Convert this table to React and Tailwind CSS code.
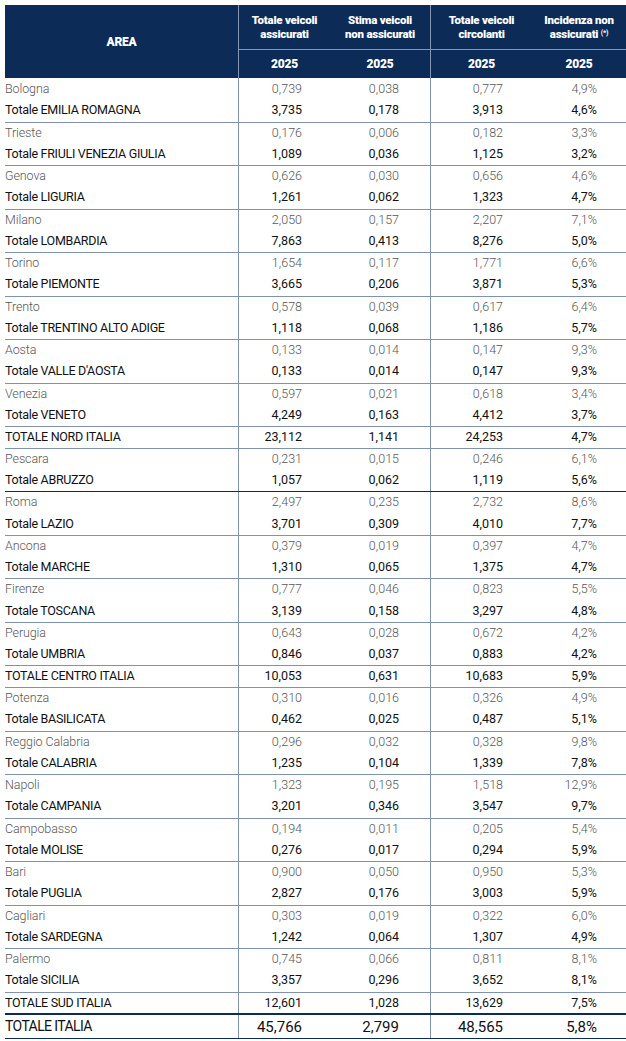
import React from "react";

const rows = [
  ["Bologna", "0,739", "0,038", "0,777", "4,9%"],
  ["Totale EMILIA ROMAGNA", "3,735", "0,178", "3,913", "4,6%"],
  ["Trieste", "0,176", "0,006", "0,182", "3,3%"],
  ["Totale FRIULI VENEZIA GIULIA", "1,089", "0,036", "1,125", "3,2%"],
  ["Genova", "0,626", "0,030", "0,656", "4,6%"],
  ["Totale LIGURIA", "1,261", "0,062", "1,323", "4,7%"],
  ["Milano", "2,050", "0,157", "2,207", "7,1%"],
  ["Totale LOMBARDIA", "7,863", "0,413", "8,276", "5,0%"],
  ["Torino", "1,654", "0,117", "1,771", "6,6%"],
  ["Totale PIEMONTE", "3,665", "0,206", "3,871", "5,3%"],
  ["Trento", "0,578", "0,039", "0,617", "6,4%"],
  ["Totale TRENTINO ALTO ADIGE", "1,118", "0,068", "1,186", "5,7%"],
  ["Aosta", "0,133", "0,014", "0,147", "9,3%"],
  ["Totale VALLE D'AOSTA", "0,133", "0,014", "0,147", "9,3%"],
  ["Venezia", "0,597", "0,021", "0,618", "3,4%"],
  ["Totale VENETO", "4,249", "0,163", "4,412", "3,7%"],
  ["TOTALE NORD ITALIA", "23,112", "1,141", "24,253", "4,7%"],
  ["Pescara", "0,231", "0,015", "0,246", "6,1%"],
  ["Totale ABRUZZO", "1,057", "0,062", "1,119", "5,6%"],
  ["Roma", "2,497", "0,235", "2,732", "8,6%"],
  ["Totale LAZIO", "3,701", "0,309", "4,010", "7,7%"],
  ["Ancona", "0,379", "0,019", "0,397", "4,7%"],
  ["Totale MARCHE", "1,310", "0,065", "1,375", "4,7%"],
  ["Firenze", "0,777", "0,046", "0,823", "5,5%"],
  ["Totale TOSCANA", "3,139", "0,158", "3,297", "4,8%"],
  ["Perugia", "0,643", "0,028", "0,672", "4,2%"],
  ["Totale UMBRIA", "0,846", "0,037", "0,883", "4,2%"],
  ["TOTALE CENTRO ITALIA", "10,053", "0,631", "10,683", "5,9%"],
  ["Potenza", "0,310", "0,016", "0,326", "4,9%"],
  ["Totale BASILICATA", "0,462", "0,025", "0,487", "5,1%"],
  ["Reggio Calabria", "0,296", "0,032", "0,328", "9,8%"],
  ["Totale CALABRIA", "1,235", "0,104", "1,339", "7,8%"],
  ["Napoli", "1,323", "0,195", "1,518", "12,9%"],
  ["Totale CAMPANIA", "3,201", "0,346", "3,547", "9,7%"],
  ["Campobasso", "0,194", "0,011", "0,205", "5,4%"],
  ["Totale MOLISE", "0,276", "0,017", "0,294", "5,9%"],
  ["Bari", "0,900", "0,050", "0,950", "5,3%"],
  ["Totale PUGLIA", "2,827", "0,176", "3,003", "5,9%"],
  ["Cagliari", "0,303", "0,019", "0,322", "6,0%"],
  ["Totale SARDEGNA", "1,242", "0,064", "1,307", "4,9%"],
  ["Palermo", "0,745", "0,066", "0,811", "8,1%"],
  ["Totale SICILIA", "3,357", "0,296", "3,652", "8,1%"],
  ["TOTALE SUD ITALIA", "12,601", "1,028", "13,629", "7,5%"],
];

function Row({ cells, index }) {
  const [label, a, b, c, d] = cells;
  const macro = label.startsWith("TOTALE ");
  const total = macro || label.startsWith("Totale ");
  // a group starts on every city row and on the macro-area totals
  let line = "";
  if (index > 0 && (!total || macro)) {
    line = label === "Roma" ? "border-t border-[#0c2b56]" : "border-t border-[#7f93b1]";
  }
  const tone = total ? "text-[#111111] font-normal" : "text-[#575757] font-light";

  return (
    <div className={`grid grid-cols-[233px_92px_100px_102px_94px] h-[21.76px] text-[12.5px] ${line} ${tone}`}>
      <div className={`flex items-center whitespace-nowrap ${total ? "tracking-[-0.3px]" : "tracking-[-0.1px]"}`}>{label}</div>
      <div className="flex items-center justify-end pr-[28px] border-l border-[#7f93b1]">{a}</div>
      <div className="flex items-center justify-end pr-[31px]">{b}</div>
      <div className="flex items-center justify-end pr-[29px] border-l border-[#7f93b1]">{c}</div>
      <div className="flex items-center justify-end pr-[29px]">{d}</div>
    </div>
  );
}

export default function App() {
  return (
    <div className="min-h-screen bg-white pt-[5px] pl-[5px] font-['Roboto','Liberation_Sans',Arial,sans-serif]">
      <div className="w-[621px]">
        {/* Header */}
        <div className="grid grid-cols-[233px_92px_100px_102px_94px] grid-rows-[45px_28px] bg-[#0c2b56] text-white font-black text-[11.5px] leading-[14px] tracking-[-0.25px]">
          <div className="row-span-2 flex items-center justify-center text-[12px]">AREA</div>
          <div className="flex items-center justify-center text-center border-l border-b border-[#8396b3]">
            Totale veicoli<br />assicurati
          </div>
          <div className="flex items-center justify-center text-center border-b border-[#8396b3]">
            Stima veicoli<br />non assicurati
          </div>
          <div className="flex items-center justify-center text-center border-l border-b border-[#8396b3]">
            Totale veicoli<br />circolanti
          </div>
          <div className="flex items-center justify-center text-center border-b border-[#8396b3]">
            <span>
              Incidenza non<br />assicurati <sup className="text-[7px] font-bold">(*)</sup>
            </span>
          </div>
          <div className="flex items-center justify-center text-[12px] border-l border-[#8396b3]">2025</div>
          <div className="flex items-center justify-center text-[12px]">2025</div>
          <div className="flex items-center justify-center text-[12px] border-l border-[#8396b3]">2025</div>
          <div className="flex items-center justify-center text-[12px]">2025</div>
        </div>

        {/* Body */}
        {rows.map((r, i) => (
          <Row key={r[0]} cells={r} index={i} />
        ))}

        {/* Grand total */}
        <div className="grid grid-cols-[233px_92px_100px_102px_94px] h-[26px] border-t-2 border-b border-[#0c2b56] text-[15px] text-[#111111]">
          <div className="flex items-center text-[14px] tracking-[-0.6px]">TOTALE ITALIA</div>
          <div className="flex items-center justify-end pr-[28px] border-l border-l-[#7f93b1]">45,766</div>
          <div className="flex items-center justify-end pr-[31px]">2,799</div>
          <div className="flex items-center justify-end pr-[29px] border-l border-l-[#7f93b1]">48,565</div>
          <div className="flex items-center justify-end pr-[29px]">5,8%</div>
        </div>
      </div>
    </div>
  );
}
